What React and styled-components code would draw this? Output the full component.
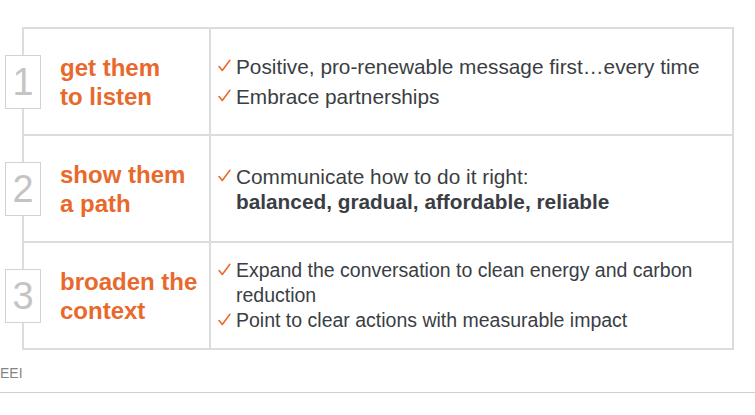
import styled, { createGlobalStyle } from "styled-components";

const GlobalStyle = createGlobalStyle`
    body{
        margin: 0;
        background: #ffffff;
        font-family: "Liberation Sans", Arial, sans-serif;
    }
`;

const steps = [
    {
        num: "1",
        title: ["get them", "to listen"],
        size: 20.8,
        gap: 5,
        items: [
            ["Positive, pro-renewable message first…every time"],
            ["Embrace partnerships"],
        ],
    },
    {
        num: "2",
        title: ["show them", "a path"],
        size: 20.8,
        gap: 5,
        items: [
            ["Communicate how to do it right:", <b key="b">balanced, gradual, affordable, reliable</b>],
        ],
    },
    {
        num: "3",
        title: ["broaden the", "context"],
        size: 19.5,
        gap: 0,
        items: [
            ["Expand the conversation to clean energy and carbon reduction"],
            ["Point to clear actions with measurable impact"],
        ],
    },
];

function CheckMark(){
    return(
        <Check viewBox="0 0 14 14" aria-hidden="true">
            <path d="M1.2 8.2 L4.6 12.4 L12.8 1.4" fill="none" stroke="#e8692b" strokeWidth="1.7" strokeLinecap="round" strokeLinejoin="round" />
        </Check>
    );
}

export default function App(){
    return(
        <Page>
            <GlobalStyle />
            <Table>
                {steps.map((s) => (
                    <Row key={s.num}>
                        <NumBox>{s.num}</NumBox>
                        <TitleCell>
                            {s.title.map((t) => <div key={t}>{t}</div>)}
                        </TitleCell>
                        <ListCell $size={s.size} $gap={s.gap}>
                            {s.items.map((it, i) => (
                                <Item key={i}>
                                    <CheckMark />
                                    <ItemText>
                                        {it.map((line, j) => <div key={j}>{line}</div>)}
                                    </ItemText>
                                </Item>
                            ))}
                        </ListCell>
                    </Row>
                ))}
            </Table>
            <Footer>EEI</Footer>
            <Rule />
        </Page>
    );
}

const Page = styled.div`
    width: 755px;
    height: 415px;
    padding-top: 27px;
    box-sizing: border-box;
`;

const Table = styled.div`
    margin-left: 22px;
    width: 712px;
    border: 2px solid #dcdcdc;
    box-sizing: border-box;
`;

const Row = styled.div`
    position: relative;
    display: grid;
    grid-template-columns: 187px 1fr;
    height: 105px;
    box-sizing: border-box;
    & + &{
        border-top: 2px solid #dcdcdc;
        height: 107px;
    }
`;

const NumBox = styled.div`
    position: absolute;
    left: -19px;
    top: 50%;
    transform: translateY(-50%);
    width: 34px;
    height: 52px;
    background: #ffffff;
    border: 1px solid #d2d2d2;
    display: flex;
    align-items: center;
    justify-content: center;
    color: #c4c4c4;
    font-size: 38px;
    line-height: 1;
`;

const TitleCell = styled.div`
    display: flex;
    flex-direction: column;
    justify-content: center;
    padding-left: 36px;
    color: #e8692b;
    font-weight: 700;
    font-size: 24px;
    line-height: 29px;
    border-right: 2px solid #dcdcdc;
`;

const ListCell = styled.div`
    display: flex;
    flex-direction: column;
    justify-content: center;
    gap: ${(p) => p.$gap}px;
    padding: 0 4px 0 7px;
    color: #3a3e44;
    font-size: ${(p) => p.$size}px;
    line-height: 25px;
`;

const Item = styled.div`
    display: flex;
    align-items: flex-start;
`;

const Check = styled.svg`
    flex: none;
    width: 13px;
    height: 13px;
    margin: 5px 5px 0 0;
`;

const ItemText = styled.div`
    b{
        font-weight: 700;
    }
`;

const Footer = styled.div`
    margin-top: 14px;
    color: #858585;
    font-size: 14px;
    line-height: 18px;
`;

const Rule = styled.div`
    margin-top: 10px;
    height: 1px;
    background: #d0d0d0;
`;
